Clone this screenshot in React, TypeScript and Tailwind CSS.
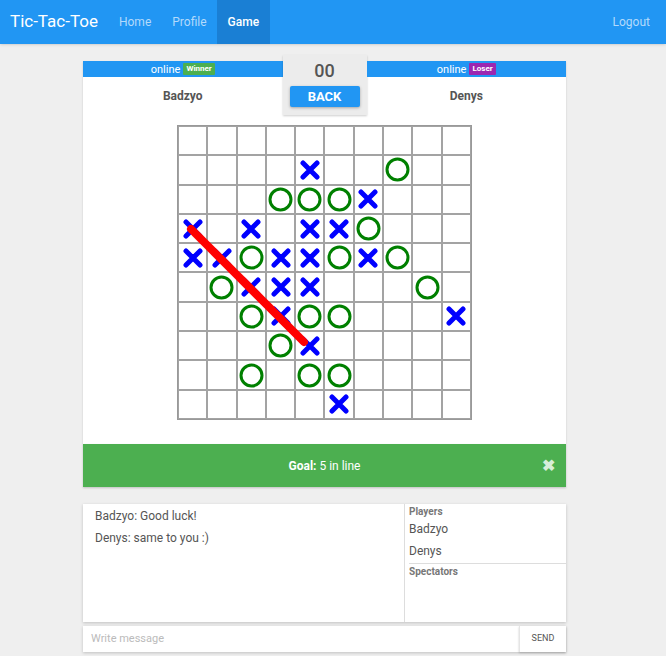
import React from 'react';

type Mark = 'x' | 'o' | null;

// board rows, top to bottom
const rows = [
  '..........',
  '....x..o..',
  '...ooox...',
  'x.x.xxo...',
  'xxoxxoxo..',
  '.oxxx...o.',
  '..oxoo...x',
  '...ox.....',
  '..o.oo....',
  '.....x....',
];

const board: Mark[][] = rows.map((r) =>
  r.split('').map((c) => (c === 'x' ? 'x' : c === 'o' ? 'o' : null))
);

function XMark() {
  return (
    <svg width="20" height="20" viewBox="0 0 20 20">
      <path d="M3 3 L17 17 M17 3 L3 17" stroke="#0000ff" strokeWidth="5" strokeLinecap="round" />
    </svg>
  );
}

function OMark() {
  return (
    <svg width="25" height="25" viewBox="0 0 25 25">
      <circle cx="12.5" cy="12.5" r="10.5" fill="none" stroke="#008000" strokeWidth="3" />
    </svg>
  );
}

function PlayerCard({ name, badge, badgeClass }: { name: string; badge: string; badgeClass: string }) {
  return (
    <div className="flex-1">
      <div className="h-[16px] bg-[#2196f3] flex items-center justify-center gap-[3px] text-white text-[11px] leading-none">
        <span>online</span>
        <span className={`${badgeClass} px-[3px] py-[2px] text-[8px] font-bold rounded-[1px]`}>{badge}</span>
      </div>
      <div className="h-[38px] flex items-center justify-center text-[12px] font-bold text-[#555]">
        {name}
      </div>
    </div>
  );
}

export default function App() {
  return (
    <div className="min-h-[656px] bg-[#efefef]" style={{ fontFamily: 'Roboto, "Liberation Sans", sans-serif' }}>
      {/* Navbar */}
      <nav className="h-[44px] bg-[#2196f3] flex items-stretch shadow-sm">
        <span className="text-white text-[17px] flex items-center pl-[10px] pr-[10px]">Tic-Tac-Toe</span>
        <a className="flex items-center px-[11px] text-[12px] text-[#b3dafb]">Home</a>
        <a className="flex items-center px-[10px] text-[12px] text-[#b3dafb]">Profile</a>
        <a className="flex items-center px-[11px] text-[12px] text-white bg-[#1a7fd4] font-medium">Game</a>
        <div className="flex-1" />
        <a className="flex items-center pr-[16px] text-[12px] text-[#b3dafb]">Logout</a>
      </nav>

      <div className="ml-[83px] w-[483px]">
        {/* Game card */}
        <div className="mt-[17px] bg-white shadow-[0_1px_2px_rgba(0,0,0,0.15)]">
          <div className="flex items-start">
            <PlayerCard name="Badzyo" badge="Winner" badgeClass="bg-[#4caf50] text-white" />
            <div className="w-[84px] -mt-[6px] h-[60px] bg-[#ececec] shadow-[0_1px_2px_rgba(0,0,0,0.2)] flex flex-col items-center">
              <div className="text-[18px] font-medium text-[#555] leading-none mt-[7px]">00</div>
              <button className="mt-[6px] w-[70px] h-[21px] bg-[#2196f3] text-white text-[13px] font-bold rounded-[2px] shadow-[0_1px_3px_rgba(0,0,0,0.3)]">
                BACK
              </button>
            </div>
            <PlayerCard name="Denys" badge="Loser" badgeClass="bg-[#9c27b0] text-white" />
          </div>

          {/* Board */}
          <div className="flex justify-center pt-[10px] pb-[24px]">
            <div className="relative w-[295px] h-[295px] grid grid-cols-10 grid-rows-10 border border-[#999]">
              {board.map((row, r) =>
                row.map((m, c) => (
                  <div key={`${r}-${c}`} className="border border-[#a3a3a3] flex items-center justify-center">
                    {m === 'x' && <XMark />}
                    {m === 'o' && <OMark />}
                  </div>
                ))
              )}
              <svg className="absolute inset-0 pointer-events-none" width="295" height="295">
                <line x1="13" y1="103" x2="126" y2="216" stroke="#ff0000" strokeWidth="8" strokeLinecap="round" />
              </svg>
            </div>
          </div>
        </div>

        {/* Goal bar */}
        <div className="h-[43px] bg-[#4caf50] flex items-center justify-center relative text-white text-[12px] shadow-[0_1px_2px_rgba(0,0,0,0.2)]">
          <span>
            <b>Goal:</b> 5 in line
          </span>
          <span className="absolute right-[11px] text-[16px] font-bold text-[#d7eed8] leading-none">✖</span>
        </div>

        {/* Chat */}
        <div className="mt-[17px] h-[118px] bg-white flex shadow-[0_1px_3px_rgba(0,0,0,0.2)]">
          <div className="flex-1 pl-[12px] pt-[1px] text-[12px] text-[#555]">
            <div className="h-[22px] flex items-center">Badzyo: Good luck!</div>
            <div className="h-[22px] flex items-center">Denys: same to you :)</div>
          </div>
          <div className="w-[162px] border-l border-[#ddd] pl-[4px] flex flex-col">
            <div className="text-[10px] font-bold text-[#777] pt-[2px] leading-[12px]">Players</div>
            <div className="text-[12px] text-[#555] h-[22px] flex items-center">Badzyo</div>
            <div className="text-[12px] text-[#555] h-[22px] flex items-center">Denys</div>
            <div className="border-t border-[#ddd] mt-[1px]" />
            <div className="text-[10px] font-bold text-[#777] pt-[2px] leading-[12px]">Spectators</div>
          </div>
        </div>

        {/* Input */}
        <div className="mt-[4px] h-[26px] bg-white flex items-stretch shadow-[0_1px_3px_rgba(0,0,0,0.2)]">
          <input
            placeholder="Write message"
            className="flex-1 pl-[8px] text-[11px] text-[#555] placeholder:text-[#bbb] outline-none bg-transparent"
          />
          <button className="w-[47px] border-l border-[#e5e5e5] text-[9px] text-[#555] shadow-[0_1px_2px_rgba(0,0,0,0.2)]">
            SEND
          </button>
        </div>
      </div>
    </div>
  );
}
